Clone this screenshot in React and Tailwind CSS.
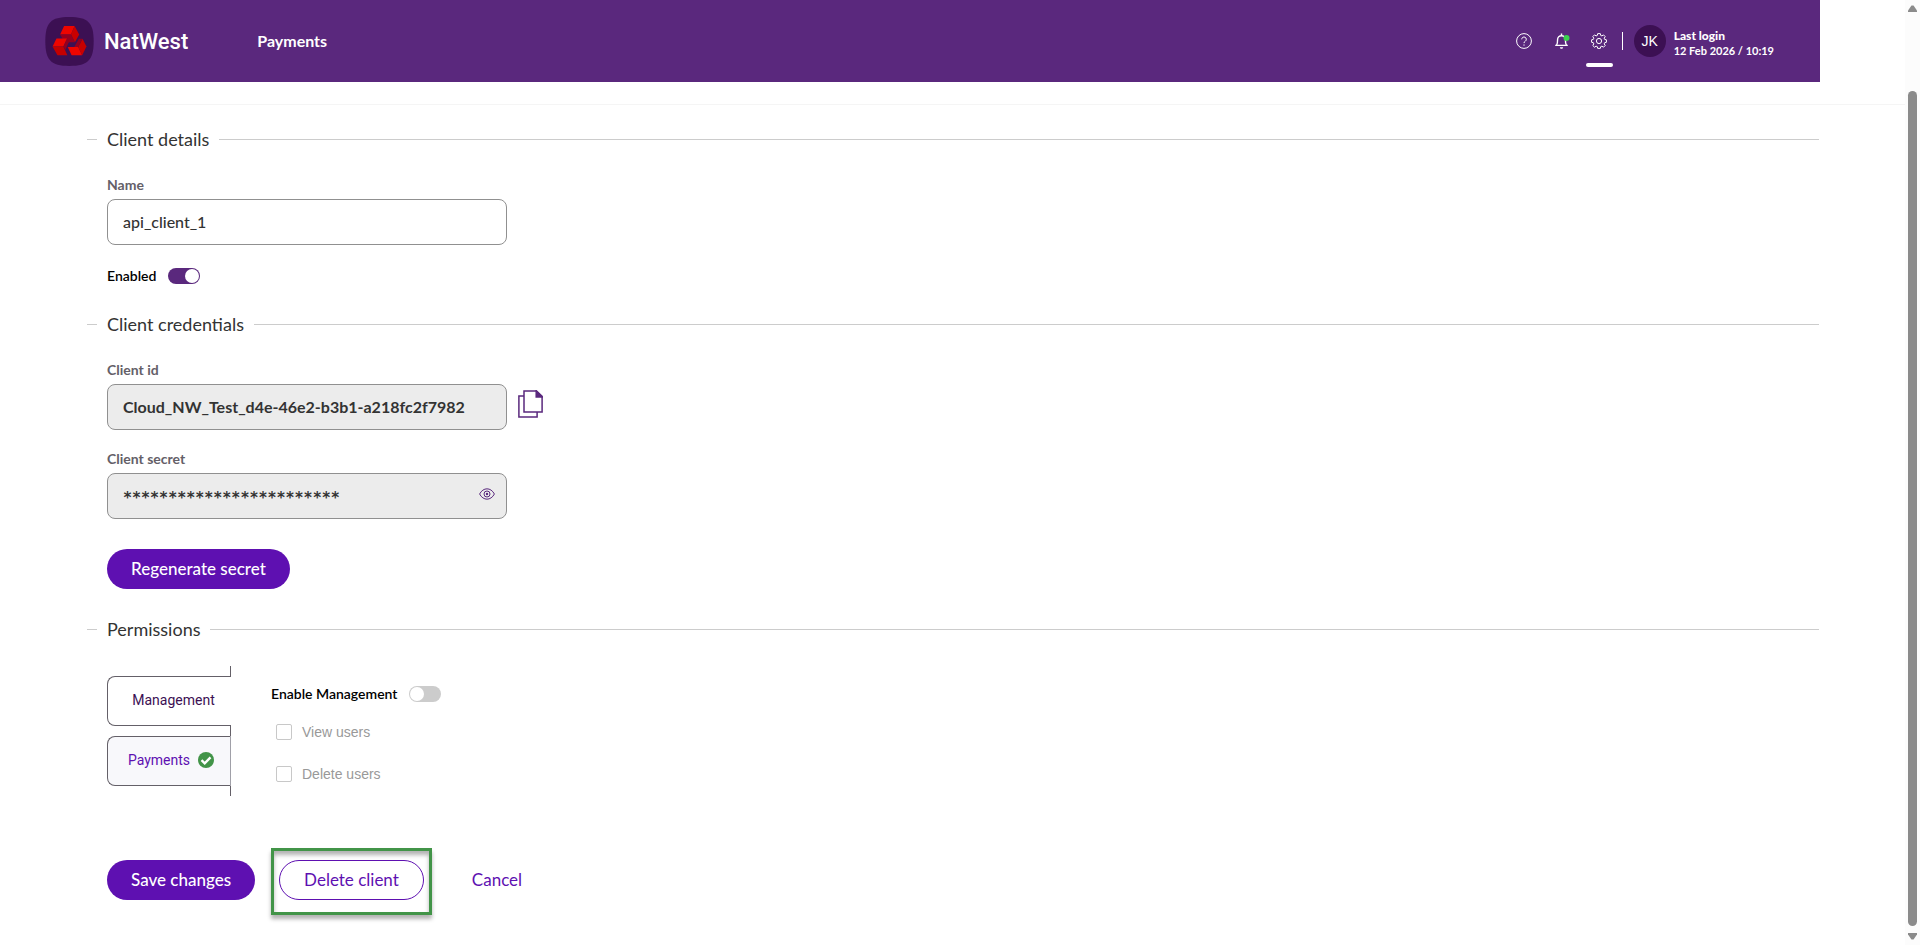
import { useState } from "react";

const SECRET = "*".repeat(24);

// ── Icons ──
function LogoMark() {
  return (
    <svg viewBox="0 0 147 149" className="h-[49px] w-[49px]" aria-hidden="true">
      <path d="M73 0C130 0 147 17 147 74S130 149 73 149 0 131 0 74 16 0 73 0Z" fill="#3c1053" />
      <path d="M57 27H89L78 53H45Z" fill="#ee0500" />
      <path d="M89 27L103 53L90 77L78 53Z" fill="#c90000" />
      <path d="M45 53H78L90 77H58Z" fill="#95001f" />
      <path d="M34 65H66L55 90H22Z" fill="#ee0500" />
      <path d="M22 90H55L67 116H37Z" fill="#c40000" />
      <path d="M66 65L71 77L61 100L55 90Z" fill="#95001f" />
      <path d="M68 91H100L112 116H80Z" fill="#ee0500" />
      <path d="M113 66L125 90L112 116L100 91Z" fill="#c90000" />
      <path d="M113 66L100 91H88L102 66Z" fill="#95001f" />
    </svg>
  );
}

function HelpIcon() {
  return (
    <svg viewBox="0 0 16 16" className="h-4 w-4" fill="none" stroke="currentColor" aria-hidden="true">
      <circle cx="8" cy="8" r="7.4" />
      <path d="M5.7 6.3a2.3 2.3 0 1 1 3.6 1.9C8.4 8.8 8 9.1 8 10.1M8 11.4v1.3" />
    </svg>
  );
}

function BellIcon() {
  return (
    <svg viewBox="0 0 16 16" className="h-4 w-4 overflow-visible" fill="none" stroke="currentColor" aria-hidden="true">
      <path d="M7.5 0.5v1.6M1.2 12.4h12.6M2.6 12.2C3.6 10.8 3.6 9 3.6 6.6a3.9 3.9 0 0 1 7.8 0c0 2.4 0 4.2 1 5.6" strokeWidth="1.4" />
      <path d="M5.8 14.2h3.4l-.8 1.6H6.6z" fill="currentColor" stroke="none" />
      <circle cx="12.5" cy="5" r="3" fill="#3ad24f" stroke="none" />
    </svg>
  );
}

function GearIcon() {
  return (
    <svg viewBox="0 0 16 16" className="h-4 w-4" fill="none" stroke="currentColor" strokeLinejoin="round" aria-hidden="true">
      <path d="M6.7.6h2.6l.4 1.8 1.2.5 1.6-1 1.7 1.7-1 1.6.5 1.2 1.7.4v2.5l-1.7.4-.5 1.2 1 1.6-1.7 1.7-1.6-1-1.2.5-.4 1.7H6.7l-.4-1.7-1.2-.5-1.6 1-1.7-1.7 1-1.6-.5-1.2-1.7-.4V6.8l1.7-.4.5-1.2-1-1.6 1.7-1.7 1.6 1 1.2-.5z" />
      <circle cx="8" cy="8" r="2.6" />
    </svg>
  );
}

function CopyIcon() {
  return (
    <svg viewBox="0 0 25 28" className="h-7 w-[25px]" fill="none" stroke="#5a287d" strokeWidth="1.5" aria-hidden="true">
      <path d="M6 6H.9v21.1h18.2V22" />
      <path d="M6 .9h12.5l5.6 5.4V22H6z" />
      <path d="M18.2.9v6h6z" fill="#5a287d" />
    </svg>
  );
}

function EyeIcon() {
  return (
    <svg viewBox="0 0 16 12" className="h-3 w-4" fill="none" stroke="#5a287d" aria-hidden="true">
      <path d="M.6 6C4.2-.9 11.8-.9 15.4 6 11.8 12.9 4.2 12.9.6 6z" />
      <circle cx="8" cy="6" r="3" />
      <circle cx="8" cy="6" r="1.2" fill="#5a287d" stroke="none" />
    </svg>
  );
}

function TickBadge() {
  return (
    <svg viewBox="0 0 16 16" className="h-4 w-4" aria-hidden="true">
      <circle cx="8" cy="8" r="8" fill="#429448" />
      <path d="M3.5 8.2l3.2 3.1 5.8-5.9" fill="none" stroke="#fff" strokeWidth="2.4" />
    </svg>
  );
}

// ── Form parts ──
function SectionTitle({ children }) {
  return (
    <div className="flex h-6 items-center gap-[10px]">
      <span className="h-px w-[10px] bg-[#cccccc]" />
      <h2 className="text-lg leading-6 text-[#333333]">{children}</h2>
      <span className="h-px flex-1 bg-[#cccccc]" />
    </div>
  );
}

function Toggle({ id, label, checked, onChange }) {
  return (
    <div className="flex h-5 items-center gap-3">
      <label htmlFor={id} className="text-sm font-semibold text-black">{label}</label>
      <input
        id={id}
        type="checkbox"
        role="switch"
        checked={checked}
        onChange={e => onChange(e.target.checked)}
        className="flex h-4 w-8 appearance-none items-center rounded-full bg-[#cccccc] px-px before:h-[14px] before:w-[14px] before:rounded-full before:bg-white checked:justify-end checked:bg-[#5a287d]"
      />
    </div>
  );
}

function Permission({ id, label }) {
  return (
    <div className="flex h-5 items-center gap-[10px]">
      <input id={id} type="checkbox" disabled className="h-4 w-4 appearance-none rounded-xs border border-[#c8c8c8] bg-white" />
      <label htmlFor={id} className="font-['Liberation_Sans',sans-serif] text-sm text-[#999999]">{label}</label>
    </div>
  );
}

const fieldLabel = "block text-sm leading-5 font-bold text-[#646068]";
const field = "h-[46px] w-[400px] rounded-lg border border-[#909090] px-[15px] pb-[2px] text-base text-[#333333] outline-none";
const pill = "h-10 rounded-full px-6 text-[17px]";

export default function App() {
  const [name, setName] = useState("api_client_1");
  const [enabled, setEnabled] = useState(true);
  const [management, setManagement] = useState(false);

  return (
    <div className="flex h-screen overflow-hidden bg-white font-[Lato,sans-serif]">
      <div className="min-w-0 flex-1">
        {/* Header */}
        <header className="mr-[85px] flex h-[82px] items-center bg-[#5a287d] pr-[46px] pl-[45px] text-white">
          <a href="#" className="flex items-center gap-[10px]">
            <LogoMark />
            <span className="font-[Roboto,sans-serif] text-[22px] font-medium">NatWest</span>
          </a>
          <nav className="ml-[69px]">
            <a href="#" className="text-base font-bold">Payments</a>
          </nav>
          <div className="ml-auto flex items-center">
            <button aria-label="Help" className="mr-[22px]"><HelpIcon /></button>
            <button aria-label="Notifications" className="mr-4"><BellIcon /></button>
            <button aria-label="Settings" className="relative flex w-[27px] justify-center">
              <GearIcon />
              <span className="absolute top-[30px] left-0 h-1 w-full rounded-sm bg-white" />
            </button>
            <span className="mx-[9px] h-[18px] w-px bg-white" />
            <span className="ml-[2px] flex h-8 w-8 items-center justify-center rounded-full bg-[#3c1053] font-['Liberation_Sans',sans-serif] text-sm">JK</span>
            <div className="mt-1 ml-2">
              <p className="text-xs leading-[15px] font-black">Last login</p>
              <p className="text-[11px] leading-[15px] font-bold">12 Feb 2026 / 10:19</p>
            </div>
          </div>
        </header>

        <main className="mt-[22px] border-t border-[#f5f5f5] pt-[22px] pr-[86px] pl-[87px]">
          <SectionTitle>Client details</SectionTitle>
          <section className="pt-6 pb-[26px] pl-5">
            <label htmlFor="name" className={fieldLabel}>Name</label>
            <input id="name" type="text" value={name} onChange={e => setName(e.target.value)} className={`${field} mt-1 mb-[21px] block bg-white font-medium`} />
            <Toggle id="enabled" label="Enabled" checked={enabled} onChange={setEnabled} />
          </section>

          <SectionTitle>Client credentials</SectionTitle>
          <section className="pt-6 pb-[28px] pl-5">
            <label htmlFor="client-id" className={fieldLabel}>Client id</label>
            <div className="mt-1 flex items-center gap-[11px]">
              <input id="client-id" type="text" readOnly value="Cloud_NW_Test_d4e-46e2-b3b1-a218fc2f7982" className={`${field} bg-[#ececec] font-bold`} />
              <button aria-label="Copy client id" className="mb-[6px]"><CopyIcon /></button>
            </div>
            <label htmlFor="client-secret" className={`${fieldLabel} mt-[19px]`}>Client secret</label>
            <div className="relative mt-1 w-[400px]">
              <input id="client-secret" type="text" readOnly value={SECRET} className="h-[46px] w-full rounded-lg border border-[#909090] bg-[#ececec] px-[15px] pt-1 font-['DejaVu_Sans_Mono',monospace] text-[15px] font-bold text-[#333333] outline-none" />
              <button aria-label="Show secret" className="absolute top-[15px] right-3"><EyeIcon /></button>
            </div>
            <button className={`${pill} mt-[30px] bg-[#5e10b1] font-medium text-white`}>Regenerate secret</button>
          </section>

          <SectionTitle>Permissions</SectionTitle>
          <section className="flex gap-10 pt-[25px] pl-5">
            <div role="tablist" className="flex w-[124px] flex-col font-[Roboto,sans-serif] text-sm">
              <span className="h-[10px] border-r border-[#646068]" />
              <button role="tab" aria-selected="true" className="h-[50px] rounded-l-lg border border-r-0 border-[#646068] pb-[2px] pl-2 text-[#3c1053]">Management</button>
              <span className="h-[10px] border-r border-[#646068]" />
              <button role="tab" aria-selected="false" className="flex h-[50px] items-center justify-center gap-2 rounded-l-lg border border-[#646068] border-r-[#a0a0a8] bg-[#f8f8fb] pb-[2px] pl-1 text-[#5e10b1]">
                Payments
                <TickBadge />
              </button>
              <span className="h-[10px] border-r border-[#646068]" />
            </div>
            <div role="tabpanel" className="pt-[18px]">
              <Toggle id="management" label="Enable Management" checked={management} onChange={setManagement} />
              <div className="flex flex-col gap-[22px] pt-[18px] pl-[5px]">
                <Permission id="view-users" label="View users" />
                <Permission id="delete-users" label="Delete users" />
              </div>
            </div>
          </section>

          {/* Actions */}
          <div className="flex items-start gap-4 pt-[52px] pl-5">
            <button className={`${pill} mt-3 bg-[#5e10b1] font-medium text-white`}>Save changes</button>
            <div className="border-[3px] border-[#429448] px-[5px] pt-[9px] pb-3 shadow-[0_4px_4px_rgba(0,0,0,0.3),inset_0_4px_4px_rgba(0,0,0,0.3)]">
              <button className={`${pill} block border border-[#5e10b1] bg-white text-[#5e10b1]`}>Delete client</button>
            </div>
            <button className={`${pill} mt-3 text-[#5e10b1]`}>Cancel</button>
          </div>
        </main>
      </div>

      {/* Scroll bar */}
      <div className="flex w-[15px] flex-col items-center bg-[#fcfcfc] py-[5px]">
        <svg viewBox="0 0 9 7" className="h-[7px] w-[9px]" aria-hidden="true"><path d="M0 7V5.5L3.5.5h2L9 5.5V7z" fill="#8b8b8b" /></svg>
        <span className="mt-[79px] mb-[7px] w-[9px] flex-1 rounded-full bg-[#8b8b8b]" />
        <svg viewBox="0 0 9 7" className="h-[7px] w-[9px]" aria-hidden="true"><path d="M0 0v1.5L3.5 6.5h2L9 1.5V0z" fill="#8b8b8b" /></svg>
      </div>
    </div>
  );
}
